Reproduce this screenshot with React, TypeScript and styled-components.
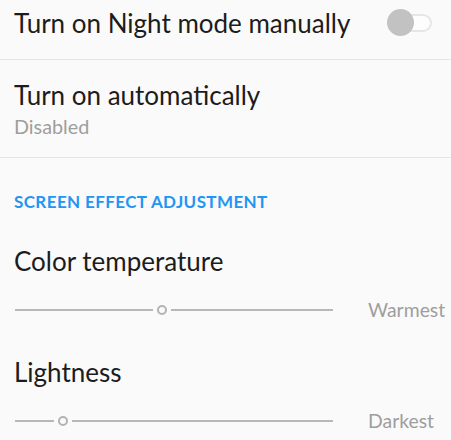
import React from "react";
import styled, { createGlobalStyle } from "styled-components";

const Global = createGlobalStyle`
  html, body { margin: 0; padding: 0; background: #fafafa; }
  body { font-family: Lato, "Noto Sans", sans-serif; }
`;

const Page = styled.div`
  width: 451px;
  height: 440px;
  background: #fafafa;
  overflow: hidden;
  display: flex;
  flex-direction: column;
`;

const Row = styled.div<{ $h: number; $pt: number }>`
  height: ${(p) => p.$h}px;
  box-sizing: border-box;
  padding: ${(p) => p.$pt}px 19px 0 14px;
  display: flex;
  align-items: flex-start;
  justify-content: space-between;
  border-bottom: 1px solid #e4e4e4;
`;

const TextCol = styled.div`
  display: flex;
  flex-direction: column;
`;

const Title = styled.div`
  font-size: 26px;
  line-height: 30px;
  color: #1c1c1c;
`;

const Summary = styled.div`
  margin-top: 4px;
  font-size: 19.8px;
  line-height: 24px;
  color: #9e9e9e;
`;

const Toggle = styled.div`
  position: relative;
  margin-top: 1px;
  width: 45px;
  height: 27px;
  display: flex;
  align-items: center;
`;

const Track = styled.div`
  margin-left: 8px;
  width: 37px;
  height: 18px;
  box-sizing: border-box;
  border: 2px solid #e6e6e6;
  border-radius: 9px;
  background: #fdfdfd;
`;

const Knob = styled.div`
  position: absolute;
  left: 0;
  top: 0;
  width: 27px;
  height: 27px;
  border-radius: 50%;
  background: #c2c2c2;
`;

const Header = styled.div`
  padding: 34px 14px 0;
  font-size: 17px;
  line-height: 20px;
  font-weight: 700;
  letter-spacing: 0.4px;
  color: #2196f3;
`;

const Item = styled.div<{ $mt: number }>`
  margin-top: ${(p) => p.$mt}px;
  padding: 0 0 0 14px;
  display: flex;
  flex-direction: column;
`;

const ItemTitle = styled(Title)`
  margin-bottom: 21px;
`;

const SliderRow = styled.div`
  display: flex;
  align-items: center;
  height: 26px;
`;

const SliderBar = styled.div`
  width: 318px;
  margin-left: 1px;
  display: flex;
  align-items: center;
`;

const Seg = styled.div<{ $grow?: boolean }>`
  height: 2px;
  background: #b8b8b8;
  flex: ${(p) => (p.$grow ? "1" : "none")};
`;

const Ring = styled.div`
  width: 10px;
  height: 10px;
  box-sizing: border-box;
  border: 2px solid #b3b3b3;
  border-radius: 50%;
  margin: 0 4px;
`;

const SideLabel = styled.div`
  margin-left: 35px;
  font-size: 19.4px;
  line-height: 26px;
  color: #9e9e9e;
`;

function Slider({ left, label }: { left: number; label: string }) {
  return (
    <SliderRow>
      <SliderBar>
        <Seg style={{ width: left }} />
        <Ring />
        <Seg $grow />
      </SliderBar>
      <SideLabel>{label}</SideLabel>
    </SliderRow>
  );
}

export default function App() {
  return (
    <Page>
      <Global />
      <Row $h={60} $pt={8}>
        <Title>Turn on Night mode manually</Title>
        <Toggle>
          <Track />
          <Knob />
        </Toggle>
      </Row>
      <Row $h={98} $pt={20}>
        <TextCol>
          <Title>Turn on automatically</Title>
          <Summary>Disabled</Summary>
        </TextCol>
      </Row>
      <Header>SCREEN EFFECT ADJUSTMENT</Header>
      <Item $mt={34}>
        <ItemTitle>Color temperature</ItemTitle>
        <Slider left={138} label="Warmest" />
      </Item>
      <Item $mt={34}>
        <ItemTitle>Lightness</ItemTitle>
        <Slider left={39} label="Darkest" />
      </Item>
    </Page>
  );
}
